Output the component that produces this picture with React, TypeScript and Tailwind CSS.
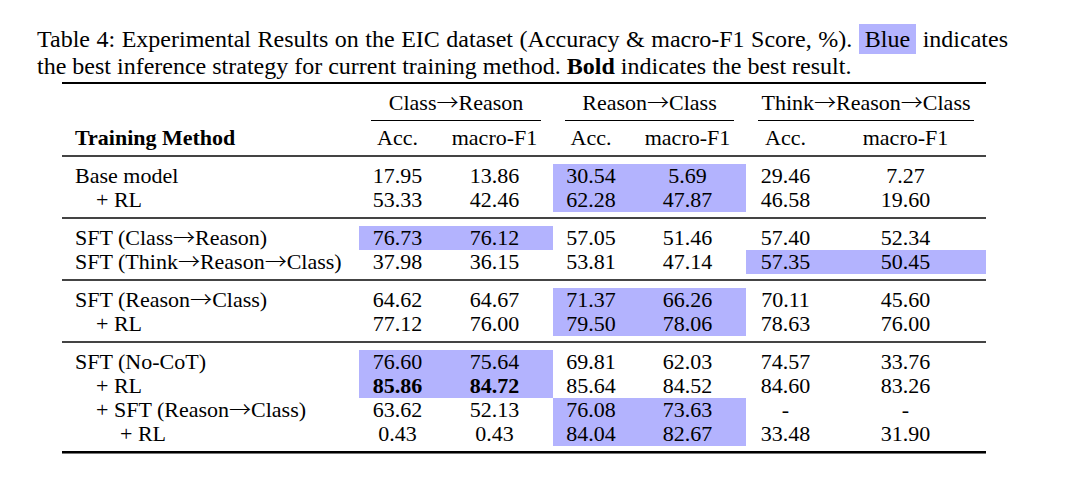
import React from 'react';

const cols = 'grid grid-cols-[297px_77px_117px_76px_117px_79px_161px]';

type Row = {
  label: string;
  indent?: number;
  vals: string[];
  blue?: number[]; // which column pair is highlighted: 0,1,2
  bold?: boolean;
};

const sections: Row[][] = [
  [
    { label: 'Base model', vals: ['17.95', '13.86', '30.54', '5.69', '29.46', '7.27'], blue: [1] },
    { label: '+ RL', indent: 1, vals: ['53.33', '42.46', '62.28', '47.87', '46.58', '19.60'], blue: [1] },
  ],
  [
    { label: 'SFT (Class→Reason)', vals: ['76.73', '76.12', '57.05', '51.46', '57.40', '52.34'], blue: [0] },
    { label: 'SFT (Think→Reason→Class)', vals: ['37.98', '36.15', '53.81', '47.14', '57.35', '50.45'], blue: [2] },
  ],
  [
    { label: 'SFT (Reason→Class)', vals: ['64.62', '64.67', '71.37', '66.26', '70.11', '45.60'], blue: [1] },
    { label: '+ RL', indent: 1, vals: ['77.12', '76.00', '79.50', '78.06', '78.63', '76.00'], blue: [1] },
  ],
  [
    { label: 'SFT (No-CoT)', vals: ['76.60', '75.64', '69.81', '62.03', '74.57', '33.76'], blue: [0] },
    { label: '+ RL', indent: 1, vals: ['85.86', '84.72', '85.64', '84.52', '84.60', '83.26'], blue: [0], bold: true },
    { label: '+ SFT (Reason→Class)', indent: 1, vals: ['63.62', '52.13', '76.08', '73.63', '-', '-'], blue: [1] },
    { label: '+ RL', indent: 2, vals: ['0.43', '0.43', '84.04', '82.67', '33.48', '31.90'], blue: [1] },
  ],
];

// splits on the arrow so it can use a font with a full-width arrow
function Arrowed({ text }: { text: string }) {
  const parts = text.split('→');
  return (
    <>
      {parts.map((p, i) => (
        <React.Fragment key={i}>
          {i > 0 && (
            <span className="font-['Noto_Sans_CJK_JP',sans-serif] font-light leading-[0]">→</span>
          )}
          {p}
        </React.Fragment>
      ))}
    </>
  );
}

function DataRow({ row }: { row: Row }) {
  const pad = row.indent === 2 ? 'pl-[58px]' : row.indent === 1 ? 'pl-[34px]' : 'pl-[13px]';
  return (
    <div className={`${cols} h-[24px] leading-[24px]`}>
      <div className={`${pad} whitespace-nowrap`}>
        <Arrowed text={row.label} />
      </div>
      {row.vals.map((v, i) => {
        const pair = Math.floor(i / 2);
        const isBlue = row.blue?.includes(pair);
        const isBold = row.bold && i < 2;
        return (
          <div
            key={i}
            className={`text-center ${isBlue ? 'bg-[#b3b3fe]' : ''} ${isBold ? 'font-bold' : ''}`}
          >
            {v}
          </div>
        );
      })}
    </div>
  );
}

export default function App() {
  return (
    <div className="min-h-screen bg-white text-black font-['Liberation_Serif',serif]">
      <div className="pl-[37px] pt-[26px]">
        <div className="w-[971px] text-[24px] leading-[27px]">
          <p className="text-justify [text-align-last:justify] whitespace-nowrap">
            Table 4: Experimental Results on the EIC dataset (Accuracy &amp; macro-F1 Score, %).{' '}
            <span className="bg-[#b3b3fe] px-[6px] py-[2px]">Blue</span> indicates
          </p>
          <p className="whitespace-nowrap">
            the best inference strategy for current training method. <b>Bold</b> indicates the best
            result.
          </p>
        </div>

        <div className="w-[924px] ml-[25px] mt-[2px] text-[22px]">
          <div className="h-[2px] bg-black" />

          {/* header */}
          <div className={`${cols} h-[36px] leading-[36px] pt-[1px]`}>
            <div />
            <div className="col-span-2 text-center">
              <Arrowed text="Class→Reason" />
            </div>
            <div className="col-span-2 text-center">
              <Arrowed text="Reason→Class" />
            </div>
            <div className="col-span-2 text-center">
              <Arrowed text="Think→Reason→Class" />
            </div>
          </div>
          <div className={`${cols} h-[1px]`}>
            <div />
            <div className="col-span-2 mx-[12px] bg-black" />
            <div className="col-span-2 mx-[12px] bg-black" />
            <div className="col-span-2 mx-[12px] bg-black" />
          </div>
          <div className={`${cols} h-[34px] leading-[34px]`}>
            <div className="pl-[13px] font-bold">Training Method</div>
            <div className="text-center">Acc.</div>
            <div className="text-center">macro-F1</div>
            <div className="text-center">Acc.</div>
            <div className="text-center">macro-F1</div>
            <div className="text-center">Acc.</div>
            <div className="text-center">macro-F1</div>
          </div>

          {sections.map((sec, si) => (
            <div key={si}>
              <div className="h-[2px] bg-[#444]" />
              <div className="pt-[7px] pb-[5px]">
                {sec.map((r, ri) => (
                  <DataRow key={ri} row={r} />
                ))}
              </div>
            </div>
          ))}
          <div className="h-[2px] bg-black" />
          <div className="h-[1px] bg-[#777]" />
        </div>
      </div>
    </div>
  );
}
